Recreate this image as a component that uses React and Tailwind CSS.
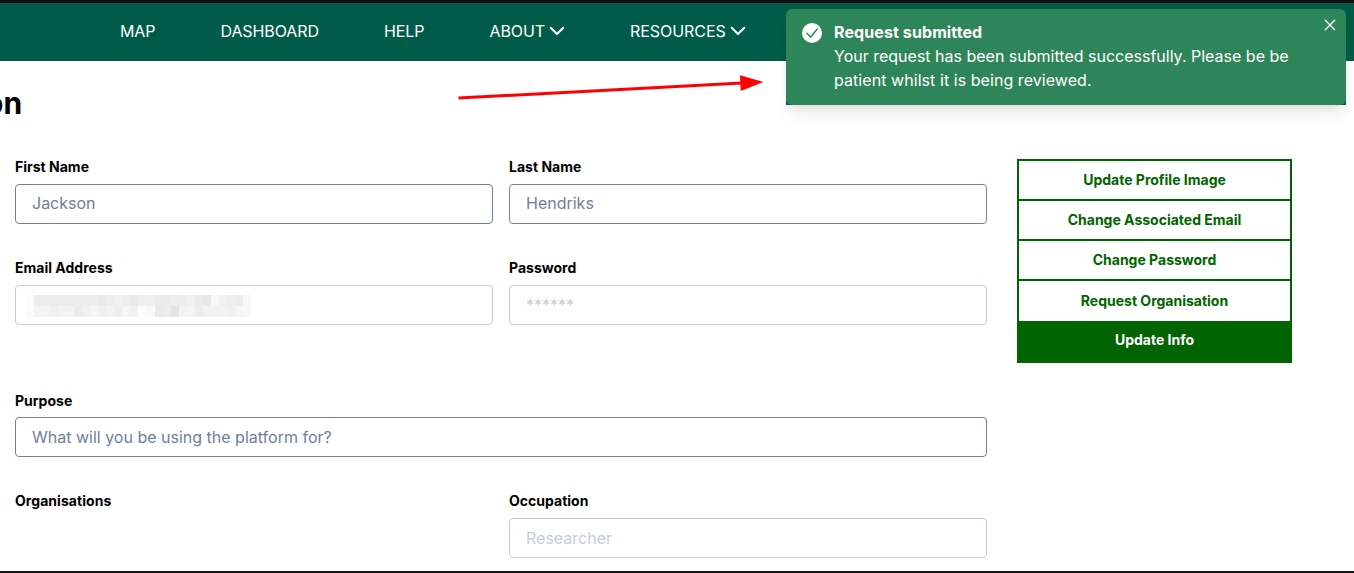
import React from "react";

const BLUR_ROWS = [
  ["#fbfbfb", "#eceded", "#ebeded", "#eceeee", "#ececec", "#ececec", "#eeeded", "#ededee", "#ecedee", "#e8e9eb", "#eeeeee", "#f2f2f2", "#eeeeee", "#e9e9e9", "#efefef", "#efefef", "#eaebec", "#eaeaea", "#ededed", "#ecefee", "#f1f1f1", "#ebebeb", "#e8e8e8", "#f7f7f7", "#f1f1f1", "#eeeeee", "#ececec", "#f7f7f7"],
  ["#fbfbfb", "#f4f4f4", "#f3f3f3", "#f0f0f0", "#f3f3f3", "#f3f3f3", "#eaebed", "#f0f0f0", "#f5f5f5", "#f0f0f0", "#f3f3f3", "#efefef", "#f5f5f5", "#f2f2f2", "#fdfdfd", "#f9f9f9", "#e9e9e9", "#ebecee", "#e2e3e5", "#f3f3f3", "#f3f5f4", "#ededed", "#f1f3f2", "#f2f2f2", "#f3f3f3", "#f0f2f1", "#f5f5f5", "#f8f8f8"],
];

function Chevron() {
  return (
    <svg className="ml-[4px] h-4 w-4" viewBox="0 0 16 16" fill="none" stroke="white" strokeWidth="2" strokeLinecap="round" strokeLinejoin="round">
      <path d="M1.7 4.8 8 11l6.3-6.2" />
    </svg>
  );
}

function NavItem({ children, className = "", menu }) {
  return (
    <a className={`flex items-center whitespace-nowrap ${className}`}>
      {children}
      {menu && <Chevron />}
    </a>
  );
}

function Field({ label, value, disabled, children, raised = true, valueClass = "", className = "" }) {
  return (
    <div className={className}>
      <div className={`h-[17px] text-sm font-bold tracking-[0.01px] text-black ${raised ? "leading-[15px]" : "leading-[17px]"}`}>{label}</div>
      <div
        className={`mt-2 flex h-10 items-center rounded border px-4 text-base ${
          disabled ? "border-[#c6cbd5] text-[#c6cdd8]" : "border-[#718096] text-[#718096]"
        }`}
      >
        <span className={valueClass}>{value}</span>
        {children}
      </div>
    </div>
  );
}

function Toast() {
  return (
    <div className="absolute top-[6px] left-[786px] h-24 w-[560px] rounded-t-md bg-[#005c48] shadow-[0_10px_15px_-3px_rgba(0,0,0,0.1),0_4px_6px_-2px_rgba(0,0,0,0.05)]">
      <div className="flex h-full rounded-md bg-[#2f855a] pt-[11px] pr-8 pl-4 text-white">
        <svg className="mt-[3px] mr-3 h-5 w-5 shrink-0" viewBox="0 0 20 20">
          <circle cx="10" cy="10" r="10" fill="white" />
          <path d="M5.1 10.4 8.6 14l6.7-8" fill="none" stroke="#2f855a" strokeWidth="1.5" strokeLinecap="round" strokeLinejoin="round" />
        </svg>
        <div className="text-base leading-6">
          <div className="font-bold tracking-[0.1px]">Request submitted</div>
          <p className="w-[480px]">
            Your request has been submitted successfully. Please be be <span className="tracking-[0.06px]">patient whilst it is being reviewed.</span>
          </p>
        </div>
      </div>
      <svg className="absolute top-[10px] right-[10px] h-3 w-3" viewBox="0 0 12 12" stroke="white" strokeWidth="1.3" strokeLinecap="round">
        <path d="M1.3 1.3l9.4 9.4M10.7 1.3l-9.4 9.4" />
      </svg>
    </div>
  );
}

export default function App() {
  return (
    <div className="relative flex h-[573px] w-[1354px] flex-col overflow-hidden border-t-[3px] border-b-2 border-[#111111] bg-white font-['Inter',sans-serif]">
      <nav className="flex h-[58px] shrink-0 items-center bg-[#005c48] pb-[2px] pl-[120px] text-base text-white">
        <NavItem className="w-[100.5px] tracking-[-0.1px]">MAP</NavItem>
        <NavItem className="w-[163.5px] tracking-[-0.1px]">DASHBOARD</NavItem>
        <NavItem className="w-[105.5px] tracking-[-0.1px]">HELP</NavItem>
        <NavItem className="w-[140.5px] tracking-[-0.1px]" menu>ABOUT</NavItem>
        <NavItem className="tracking-[-0.05px]" menu>RESOURCES</NavItem>
      </nav>

      <div className="flex h-[98px] shrink-0 overflow-hidden pt-[24px]">
        <h1 className="-ml-[15px] h-9 text-[30px] leading-9 font-bold text-black">on</h1>
      </div>

      <main className="flex pl-[15px]">
        <div className="grid w-[972px] grid-cols-2 gap-x-4">
          <Field className="h-[101px]" valueClass="pb-[2px]" label="First Name" value="Jackson" />
          <Field className="h-[101px]" valueClass="pb-[2px]" label="Last Name" value="Hendriks" />
          <Field className="h-[132px]" label="Email Address" disabled>
            <div className="-ml-[6px] shrink-0 pt-[2px]">
              {BLUR_ROWS.map((row, r) => (
                <div key={r} className="flex h-[11px]">
                  {row.map((color, c) => (
                    <span key={c} className="w-[8.04px]" style={{ backgroundColor: color }} />
                  ))}
                </div>
              ))}
            </div>
          </Field>
          <Field className="h-[132px]" label="Password" value="******" disabled />
          <Field className="col-span-2 h-[101px]" raised={false} label="Purpose" value="What will you be using the platform for?" />
          <div className="h-[17px] text-sm leading-[15px] font-bold tracking-[0.05px] text-black">Organisations</div>
          <Field label="Occupation" value="Researcher" disabled />
        </div>

        <div className="ml-[30px] flex h-[204px] w-[275px] flex-col border-2 border-[#006400] text-center text-sm font-bold text-[#006400]">
          <button className="h-10 border-b-2 border-[#006400]">Update Profile Image</button>
          <button className="h-10 border-b-2 border-[#006400]">Change Associated Email</button>
          <button className="h-10 border-b-2 border-[#006400]">Change Password</button>
          <button className="h-10">Request Organisation</button>
          <button className="h-10 bg-[#006400] pb-[2px] text-white">Update Info</button>
        </div>
      </main>

      <svg className="absolute top-[69px] left-[450px] h-8 w-[320px]" viewBox="450 72 320 32">
        <path d="M458.5 98 742 83" stroke="#ff0000" strokeWidth="3" />
        <path d="M740 75.3 763.5 82 740.7 91Z" fill="#ff0000" />
      </svg>
      <Toast />
    </div>
  );
}
